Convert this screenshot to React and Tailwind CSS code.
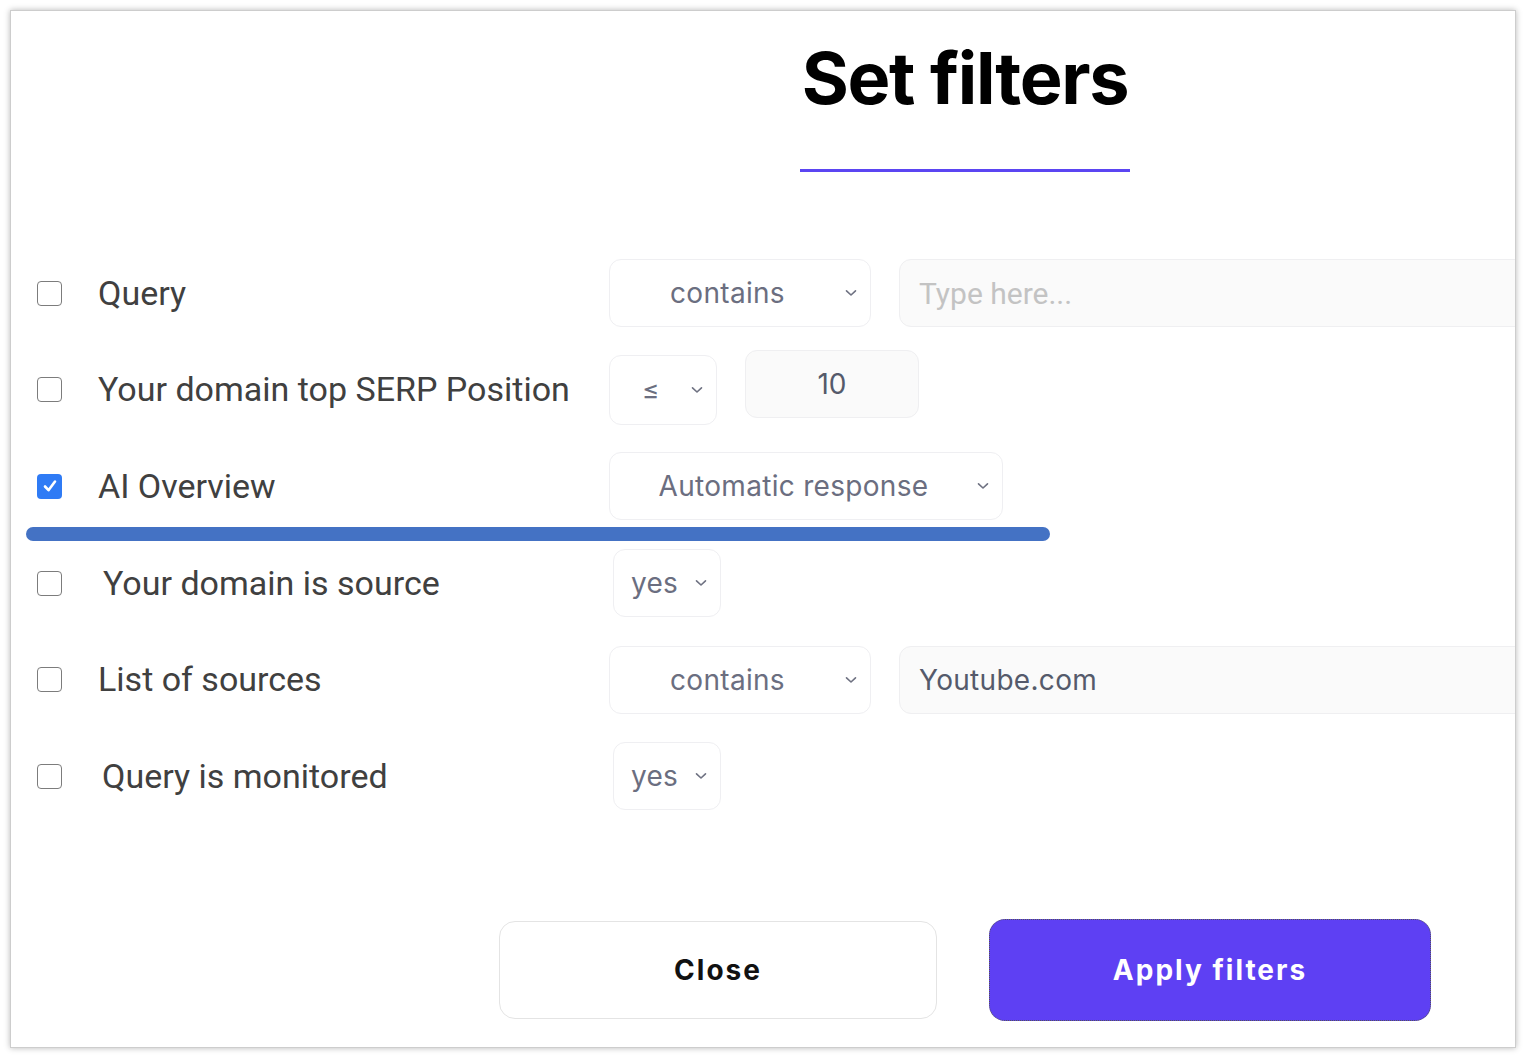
import React from "react";

function Chevron() {
  return (
    <svg width="12" height="8" viewBox="0 0 12 8" className="mr-[13px] shrink-0">
      <path d="M1.5 1.8 L6 6 L10.5 1.8" fill="none" stroke="#6f7282" strokeWidth="1.6" strokeLinecap="round" strokeLinejoin="round" />
    </svg>
  );
}

function Select({ value, w, extra = "" }) {
  return (
    <div className={`flex items-center h-[68px] rounded-[12px] border border-[#efeff2] bg-white ${w} ${extra}`}>
      <span className="flex-1 text-center text-[28px] text-[#6b6e80] font-['Inter',sans-serif] tracking-[0.3px] whitespace-nowrap">{value}</span>
      <Chevron />
    </div>
  );
}

function Checkbox({ checked }) {
  if (checked) {
    return (
      <div className="w-[25px] h-[25px] rounded-[4px] bg-[#2f7bf5] flex items-center justify-center shrink-0">
        <svg width="18" height="18" viewBox="0 0 18 18">
          <path d="M4 9.5 L7.5 13.2 L14 4.5" fill="none" stroke="white" strokeWidth="2.6" strokeLinecap="round" strokeLinejoin="round" />
        </svg>
      </div>
    );
  }
  return <div className="w-[25px] h-[25px] rounded-[4px] border-[1.5px] border-[#7c7c7c] bg-white shrink-0" />;
}

function Row({ checked, label, labelPad = "", children }) {
  return (
    <div className="flex items-center h-[96.6px] pl-[26px]">
      <Checkbox checked={checked} />
      <div className={`ml-[36px] w-[511px] shrink-0 whitespace-nowrap text-[34px] text-[#404040] font-['Roboto',sans-serif] ${labelPad}`}>{label}</div>
      <div className="flex items-center">{children}</div>
    </div>
  );
}

export default function App() {
  return (
    <div className="w-[1526px] h-[1058px] bg-white p-[10px]">
      <div className="relative w-[1506px] h-[1038px] bg-white border border-[#cdcdcd] shadow-[0_0_6px_rgba(0,0,0,0.28)] overflow-hidden flex flex-col">
        <div className="ml-[789px] w-[330px] mt-[31px]">
          <div className="text-[72px] leading-[72px] font-bold text-black text-center whitespace-nowrap font-['Inter',sans-serif] tracking-[-1.3px]">Set filters</div>
          <div className="mt-[55px] h-[3px] bg-[#5b45f2]" />
        </div>

        <div className="mt-[73px] flex flex-col">
          <Row label="Query">
            <Select value="contains" w="w-[262px]" />
            <div className="ml-[28px] w-[700px] h-[68px] rounded-[12px] border border-[#efeff1] bg-[#fafafa] flex items-center pl-[19px] text-[30px] text-[#c3c3c3] font-['Roboto',sans-serif] shrink-0">Type here...</div>
          </Row>
          <Row label="Your domain top SERP Position">
            <div className="flex items-center h-[70px] w-[108px] rounded-[12px] border border-[#efeff2] bg-white">
              <span className="flex-1 text-center text-[26px] text-[#6b6e80] font-['Inter',sans-serif]">≤</span>
              <Chevron />
            </div>
            <div className="ml-[28px] mb-[12px] w-[174px] h-[68px] rounded-[12px] border border-[#efeff1] bg-[#fafafa] flex items-center justify-center text-[28px] text-[#555a6b] font-['Inter',sans-serif]">10</div>
          </Row>
          <Row checked label="AI Overview">
            <Select value="Automatic response" w="w-[394px]" />
          </Row>
          <Row label="Your domain is source" labelPad="pl-[5px]">
            <Select value="yes" w="w-[108px]" extra="ml-[4px]" />
          </Row>
          <Row label="List of sources">
            <Select value="contains" w="w-[262px]" />
            <div className="ml-[28px] w-[700px] h-[68px] rounded-[12px] border border-[#efeff1] bg-[#fafafa] flex items-center pl-[19px] text-[28px] text-[#555a6b] font-['Inter',sans-serif] tracking-[0.3px] shrink-0">Youtube.com</div>
          </Row>
          <Row label="Query is monitored" labelPad="pl-[4px]">
            <Select value="yes" w="w-[108px]" extra="ml-[4px]" />
          </Row>
        </div>

        <div className="mt-[94px] pl-[488px] flex items-center gap-[52px]">
          <button className="w-[438px] h-[98px] rounded-[16px] border-[1.5px] border-[#e4e4e4] bg-white text-[28px] font-bold tracking-[2px] text-[#111] font-['Inter',sans-serif]">Close</button>
          <button className="w-[442px] h-[102px] rounded-[16px] bg-[#5e40f3] border border-dotted border-[#555] text-[28px] font-bold tracking-[2px] text-white font-['Inter',sans-serif]">Apply filters</button>
        </div>

        <div className="absolute left-[15px] top-[516px] w-[1024px] h-[14px] rounded-full bg-[#4472c4]" />
      </div>
    </div>
  );
}
